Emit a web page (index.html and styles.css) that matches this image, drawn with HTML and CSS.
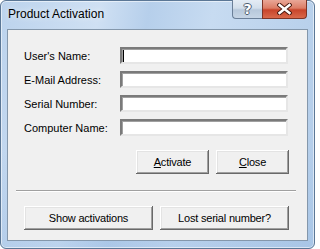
FILE: index.html
```html
<!DOCTYPE html>
<html>
<head>
<meta charset="utf-8">
<link rel="stylesheet" href="styles.css">
</head>
<body>
<div class="window">
  <div class="titlebar">
    <span class="title">Product Activation</span>
    <div class="caption-btns">
      <div class="cap help"><span class="qmark">?</span></div>
      <div class="cap close">
        <svg width="15" height="12" viewBox="0 0 15 12">
          <path d="M2.5 2 L12.5 10 M12.5 2 L2.5 10" stroke="#4a1a10" stroke-width="4.4" stroke-linecap="square" fill="none"/>
          <path d="M2.5 2 L12.5 10 M12.5 2 L2.5 10" stroke="#ffffff" stroke-width="2.4" stroke-linecap="square" fill="none"/>
        </svg>
      </div>
    </div>
  </div>
  <div class="client">
    <div class="form">
      <div class="row"><span class="label">User's Name:</span><div class="input"><span class="caret"></span></div></div>
      <div class="row"><span class="label">E-Mail Address:</span><div class="input"></div></div>
      <div class="row"><span class="label">Serial Number:</span><div class="input"></div></div>
      <div class="row"><span class="label">Computer Name:</span><div class="input"></div></div>
    </div>
    <div class="actions">
      <div class="btn small"><u>A</u>ctivate</div>
      <div class="btn small"><u>C</u>lose</div>
    </div>
    <div class="separator"></div>
    <div class="bottom-actions">
      <div class="btn wide">Show activations</div>
      <div class="btn wide">Lost serial number?</div>
    </div>
  </div>
</div>
</body>
</html>
```
FILE: styles.css
```css
html, body {
  margin: 0;
  padding: 0;
  background: #ffffff;
}
body {
  width: 315px;
  height: 249px;
  overflow: hidden;
  font-family: "Liberation Sans", Arial, sans-serif;
}
.window {
  box-sizing: border-box;
  width: 315px;
  height: 249px;
  border: 1px solid #5b7796;
  border-radius: 6px;
  padding: 0 6px 7px 6px;
  display: flex;
  flex-direction: column;
  background:
    linear-gradient(180deg, rgba(255,255,255,0) 0%, rgba(255,255,255,0) 60%, rgba(150,185,225,0.35) 100%),
    linear-gradient(100deg, #bcd3ed 0%, #cfe0f3 28%, #b6cfeb 42%, #c7dbf1 60%, #b2cce9 100%);
  box-shadow: inset 0 0 0 1px rgba(255,255,255,0.55);
}
.titlebar {
  height: 28px;
  display: flex;
  align-items: flex-start;
  flex-shrink: 0;
}
.title {
  padding-left: 1px;
  padding-top: 6px;
  font-size: 12px;
  color: #000000;
  text-shadow: 0 0 6px rgba(255,255,255,0.9);
}
.caption-btns {
  margin-left: auto;
  margin-right: 1px;
  margin-top: -1px;
  display: flex;
}
.cap {
  box-sizing: border-box;
  height: 19px;
  display: flex;
  align-items: center;
  justify-content: center;
  border: 1px solid #6a7f98;
  border-top: none;
}
.help {
  width: 30px;
  border-radius: 0 0 0 4px;
  border-right: none;
  background: linear-gradient(180deg, #e4ecf5 0%, #d3dfeb 45%, #b7c8db 55%, #c6d5e5 100%);
}
.qmark {
  font-family: "DejaVu Sans", sans-serif;
  font-weight: bold;
  font-size: 14px;
  line-height: 14px;
  color: #ffffff;
  text-shadow: 1px 0 0 #4d5d70, -1px 0 0 #4d5d70, 0 1px 0 #4d5d70, 0 -1px 0 #4d5d70;
}
.close {
  width: 45px;
  border-radius: 0 0 4px 0;
  border-color: #7d3527;
  background: linear-gradient(180deg, #e9a797 0%, #dc7d66 45%, #c8452b 55%, #d9694b 100%);
}
.client {
  flex: 1;
  background: #f0f0f0;
  border: 1px solid #8497ab;
  display: flex;
  flex-direction: column;
  font-size: 11px;
  color: #000000;
}
.form {
  padding-top: 17px;
  padding-left: 16px;
  display: flex;
  flex-direction: column;
  gap: 7px;
}
.row {
  display: flex;
  align-items: center;
  height: 17px;
}
.label {
  width: 96px;
}
.input {
  box-sizing: border-box;
  width: 168px;
  height: 17px;
  background: #ffffff;
  border-style: solid;
  border-width: 2px;
  border-color: #7a7a7a #e6e6e6 #e6e6e6 #7a7a7a;
  box-shadow: inset 1px 1px 0 #a0a0a0;
  display: flex;
  align-items: center;
}
.caret {
  width: 1px;
  height: 12px;
  margin-left: 1px;
  background: #000000;
}
.actions {
  margin-top: 14px;
  display: flex;
  justify-content: flex-end;
  gap: 7px;
  padding-right: 18px;
}
.btn {
  box-sizing: border-box;
  height: 24px;
  display: flex;
  align-items: center;
  justify-content: center;
  background: #f0f0f0;
  box-shadow: inset -1px -1px 0 #696969, inset 1px 1px 0 #ffffff, inset -2px -2px 0 #a0a0a0, inset 2px 2px 0 #e3e3e3;
  letter-spacing: -0.2px;
}
.btn u {
  text-decoration: underline;
  text-underline-offset: 1px;
}
.small {
  width: 73px;
}
.wide {
  width: 129px;
}
.separator {
  margin: 16px 11px 0 8px;
  border-top: 1px solid #a0a0a0;
  border-bottom: 1px solid #ffffff;
  height: 0;
}
.bottom-actions {
  margin-top: 14px;
  padding-left: 16px;
  display: flex;
  gap: 7px;
}
```
